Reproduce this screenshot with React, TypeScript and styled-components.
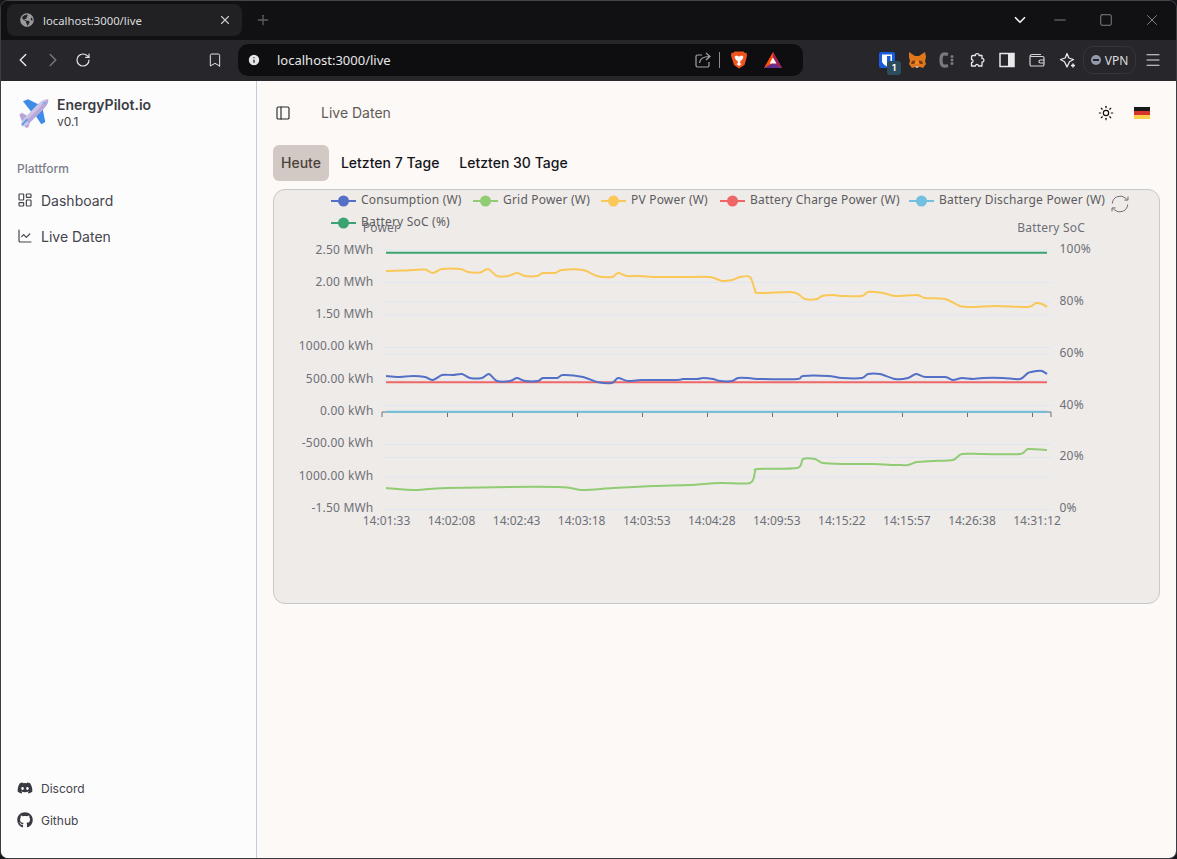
import React from 'react'
import styled, { createGlobalStyle } from 'styled-components'
import {
  Bookmark,
  ChartLine,
  ChevronDown,
  ChevronLeft,
  ChevronRight,
  Info,
  LayoutDashboard,
  Menu,
  Minus,
  PanelLeft,
  Plus,
  RotateCw,
  Square,
  Sun,
  X,
} from 'lucide-react'
import { FaDiscord, FaGithub, FaGlobeAmericas } from 'react-icons/fa'

const GlobalStyle = createGlobalStyle`
  html, body {
    margin: 0;
    padding: 0;
    background: #15161a;
  }
  * {
    box-sizing: border-box;
  }
`

const Window = styled.div`
  width: 1177px;
  height: 859px;
  display: flex;
  flex-direction: column;
  overflow: hidden;
  border: 1px solid #3b3c40;
  border-top-color: #44454a;
  border-radius: 8px;
  font-family: Inter, 'Noto Sans', sans-serif;
  background: #111113;
`

const TabBar = styled.div`
  height: 39px;
  flex: none;
  display: flex;
  align-items: center;
  padding: 3px 0 4px 6px;
  background: #111113;
  color: #e6e6e8;
`

const BrowserTab = styled.div`
  width: 235px;
  height: 32px;
  display: flex;
  align-items: center;
  padding: 0 10px 0 13px;
  gap: 9px;
  border-radius: 8px;
  background: #212124;
  font-family: 'Noto Sans', sans-serif;
  font-size: 11.3px;
  color: #dcdcdf;
`

const TabTitle = styled.span`
  flex: 1;
`

const NewTab = styled.div`
  width: 42px;
  display: flex;
  justify-content: center;
  color: #5c5d62;
`

const WindowControls = styled.div`
  margin-left: auto;
  display: flex;
  align-items: center;
  padding-right: 1px;
`

const WindowButton = styled.div<{ $w: number }>`
  width: ${(p) => p.$w}px;
  display: flex;
  justify-content: center;
  color: #7f7f84;
`

const Toolbar = styled.div`
  height: 41px;
  flex: none;
  display: flex;
  align-items: center;
  padding: 0 0 1px 7px;
  background: #27272b;
  color: #e4e4e6;
`

const NavGroup = styled.div`
  width: 230px;
  display: flex;
  align-items: center;
`

const ToolButton = styled.div<{ $dim?: boolean }>`
  width: 30px;
  height: 30px;
  flex: none;
  position: relative;
  display: flex;
  align-items: center;
  justify-content: center;
  color: ${(p) => (p.$dim ? '#77787c' : '#e4e4e6')};
`

const BookmarkButton = styled(ToolButton)`
  margin-left: auto;
  margin-right: 8px;
`

const AddressBar = styled.div`
  width: 565px;
  height: 32px;
  flex: none;
  display: flex;
  align-items: center;
  padding: 0 13px 0 9px;
  border-radius: 10px;
  background: #0e0e10;
  font-family: 'Noto Sans', sans-serif;
  font-size: 13px;
  color: #e8e8ea;
`

const UrlText = styled.span`
  margin-left: 16px;
  flex: 1;
`

const Divider = styled.span`
  width: 1px;
  height: 16px;
  background: #8b8c90;
  margin: 0 2px 0 7px;
`

const BarIcon = styled.div`
  width: 34px;
  display: flex;
  justify-content: center;
`

const Extensions = styled.div`
  margin-left: 69px;
  display: flex;
  align-items: center;
`

const Badge = styled.span`
  position: absolute;
  right: 1px;
  bottom: 0;
  width: 14px;
  height: 14px;
  border-radius: 3px;
  background: #2d4d5f;
  color: #fff;
  font-size: 9px;
  font-weight: 700;
  line-height: 14px;
  text-align: center;
`

const VpnPill = styled.div`
  width: 53px;
  height: 28px;
  margin: 0 2px 0 1px;
  flex: none;
  display: flex;
  align-items: center;
  justify-content: center;
  gap: 4px;
  border: 1px solid #34353a;
  border-radius: 10px;
  font-family: 'Noto Sans', sans-serif;
  font-size: 12px;
  color: #dcdcdf;
`

const VpnDot = styled.span`
  width: 10px;
  height: 10px;
  border-radius: 50%;
  background: #9499ad;
  display: flex;
  align-items: center;
  justify-content: center;
  &::after {
    content: '';
    width: 6px;
    height: 1.5px;
    background: #27272b;
  }
`

const Page = styled.div`
  flex: 1;
  min-height: 0;
  display: flex;
  background: #fdf9f6;
`

const Sidebar = styled.aside`
  width: 256px;
  flex: none;
  display: flex;
  flex-direction: column;
  justify-content: space-between;
  padding: 16px 16px 24px;
  background: #fcfcfc;
  border-right: 1px solid #c5ccdc;
`

const Brand = styled.div`
  display: flex;
  align-items: center;
  gap: 8px;
  height: 32px;
`

const BrandText = styled.div`
  display: flex;
  flex-direction: column;
  line-height: 16px;
`

const BrandName = styled.span`
  font-size: 14px;
  font-weight: 600;
  color: #3c3c44;
`

const BrandVersion = styled.span`
  margin-top: 1px;
  font-size: 12px;
  color: #3f3f46;
`

const NavLabel = styled.div`
  margin-top: 32px;
  height: 16px;
  line-height: 16px;
  font-size: 12px;
  font-weight: 500;
  color: #7b7f8a;
`

const NavList = styled.nav`
  margin-top: 7px;
  display: flex;
  flex-direction: column;
  gap: 4px;
`

const NavItem = styled.div`
  height: 32px;
  display: flex;
  align-items: center;
  gap: 8px;
  font-size: 14px;
  color: #44444c;
`

const FooterList = styled.div`
  display: flex;
  flex-direction: column;
  gap: 4px;
`

const FooterItem = styled.div`
  height: 28px;
  display: flex;
  align-items: center;
  gap: 8px;
  font-size: 12px;
  color: #45454d;
`

const Main = styled.main`
  flex: 1;
  min-width: 0;
  padding: 0 16px;
`

const Header = styled.header`
  height: 64px;
  display: flex;
  align-items: center;
  color: #27272a;
`

const SidebarToggle = styled(PanelLeft)`
  margin-left: 2px;
`

const HeaderTitle = styled.span`
  margin-left: 30px;
  padding-bottom: 1px;
  font-size: 14px;
  color: #5f5a56;
`

const HeaderActions = styled.div`
  margin-left: auto;
  margin-right: 10px;
  display: flex;
  align-items: center;
  gap: 20px;
`

const Flag = styled.div`
  width: 16px;
  height: 12px;
  display: flex;
  flex-direction: column;
  background: linear-gradient(#1a1a1a 0 33%, #d8342c 33% 66%, #fbce4b 66% 100%);
`

const RangeTabs = styled.div`
  display: flex;
  gap: 4px;
`

const RangeTab = styled.button<{ $active?: boolean }>`
  height: 36px;
  padding: 0 8px 2px;
  border: 0;
  border-radius: 6px;
  background: ${(p) => (p.$active ? '#d2c9c4' : 'transparent')};
  font-family: inherit;
  font-size: 14px;
  font-weight: 500;
  color: ${(p) => (p.$active ? '#4a423c' : '#14161c')};
`

const ChartCard = styled.section`
  margin-top: 8px;
  height: 415px;
  border: 1px solid #c6c8ca;
  border-radius: 12px;
  background: #efebe8;
  overflow: hidden;
`

const ChartSvg = styled.svg`
  display: block;
  width: 100%;
  height: 100%;
`

const ChartText = styled.text<{ $anchor?: string; $dark?: boolean; $tight?: boolean }>`
  font-family: 'Noto Sans', 'Open Sans', sans-serif;
  font-size: 12px;
  letter-spacing: ${(p) => (p.$tight ? '0' : '0.2px')};
  fill: ${(p) => (p.$dark ? '#5c5c60' : '#6e7079')};
  text-anchor: ${(p) => p.$anchor || 'start'};
  dominant-baseline: central;
`

type Pt = [number, number]

const consumption: Pt[] = [
  [386, 376], [398, 377], [413, 376], [425, 377], [433, 380], [442, 375], [453, 375], [462, 374],
  [470, 378], [482, 378], [489, 374], [497, 381], [510, 381], [517, 378], [525, 381], [538, 381],
  [543, 378], [557, 378], [563, 375], [583, 377], [597, 382], [612, 383], [618, 378], [628, 381],
  [642, 380], [677, 380], [683, 379], [697, 379], [703, 378], [713, 379], [720, 381], [732, 381],
  [738, 378], [748, 378], [758, 379], [797, 379], [803, 376], [828, 376], [842, 378], [862, 378],
  [868, 374], [880, 374], [895, 379], [908, 378], [916, 374], [925, 377], [945, 377], [953, 380],
  [962, 378], [973, 379], [983, 378], [1003, 378], [1020, 379], [1028, 373], [1037, 371], [1042, 371],
  [1047, 374],
]

const pvPower: Pt[] = [
  [386, 271], [403, 270.5], [413, 270], [425, 269.5], [433, 273], [442, 269], [460, 269], [468, 272],
  [480, 272.5], [488, 269], [497, 276], [508, 276], [517, 273], [525, 276], [537, 276], [543, 273],
  [555, 273], [562, 270], [583, 270], [597, 276], [612, 277], [618, 273], [627, 276], [640, 276],
  [657, 277], [683, 277], [710, 277], [722, 281], [732, 280], [740, 277], [750, 277], [755, 290],
  [758, 293], [790, 292], [798, 294], [805, 299], [817, 299], [822, 296], [833, 295], [843, 296],
  [862, 296], [868, 292], [883, 293], [895, 296], [917, 295], [925, 298], [945, 299], [960, 306],
  [973, 307], [997, 306], [1028, 307], [1036, 303], [1042, 304], [1047, 307],
]

const gridPower: Pt[] = [
  [386, 488], [417, 490], [447, 488], [557, 487], [582, 490], [613, 488], [653, 486], [690, 485],
  [720, 483], [750, 483], [755, 472], [758, 469], [797, 468], [803, 459], [815, 459], [823, 463],
  [843, 464], [873, 464], [897, 465], [908, 465], [917, 462], [933, 461], [953, 460], [962, 454],
  [983, 454], [1020, 454], [1028, 449], [1047, 450],
]

// catmull-rom, same look as the smooth line of the chart
const smooth = (pts: Pt[]) => {
  let d = `M${pts[0][0]} ${pts[0][1]}`
  for (let i = 0; i < pts.length - 1; i++) {
    const p0 = pts[Math.max(i - 1, 0)]
    const p1 = pts[i]
    const p2 = pts[i + 1]
    const p3 = pts[Math.min(i + 2, pts.length - 1)]
    const c1x = p1[0] + (p2[0] - p0[0]) / 7
    const c1y = p1[1] + (p2[1] - p0[1]) / 7
    const c2x = p2[0] - (p3[0] - p1[0]) / 7
    const c2y = p2[1] - (p3[1] - p1[1]) / 7
    d += ` C${c1x} ${c1y} ${c2x} ${c2y} ${p2[0]} ${p2[1]}`
  }
  return d
}

const gridYs = [250, 282.5, 315, 347.5, 380, 444.5, 477, 509.5, 302, 354, 405.5, 457.5]

const leftLabels: [string, number][] = [
  ['2.50 MWh', 249],
  ['2.00 MWh', 281.5],
  ['1.50 MWh', 313.5],
  ['1000.00 kWh', 345.5],
  ['500.00 kWh', 378],
  ['0.00 kWh', 410.5],
  ['-500.00 kWh', 442.5],
  ['1000.00 kWh', 475],
  ['-1.50 MWh', 507],
]

const rightLabels: [string, number][] = [
  ['100%', 248],
  ['80%', 300],
  ['60%', 352.5],
  ['40%', 404.5],
  ['20%', 455.5],
  ['0%', 507.5],
]

const times = [
  '14:01:33', '14:02:08', '14:02:43', '14:03:18', '14:03:53', '14:04:28',
  '14:09:53', '14:15:22', '14:15:57', '14:26:38', '14:31:12',
]

const ticks = [382, 447.5, 512.5, 577.5, 642.5, 707.5, 772.5, 837.5, 902.5, 967.5, 1032.5, 1051]

const legend: { name: string; color: string; x: number; y: number }[] = [
  { name: 'Consumption (W)', color: '#5470c6', x: 331, y: 201 },
  { name: 'Grid Power (W)', color: '#91cc75', x: 473, y: 201 },
  { name: 'PV Power (W)', color: '#fac858', x: 601, y: 201 },
  { name: 'Battery Charge Power (W)', color: '#ee6666', x: 720, y: 201 },
  { name: 'Battery Discharge Power (W)', color: '#73c0de', x: 909, y: 201 },
  { name: 'Battery SoC (%)', color: '#3ba272', x: 331, y: 223 },
]

const PowerChart = () => (
  <ChartSvg viewBox="274 190 885 413">
    {gridYs.map((y) => (
      <line key={y} x1={382} x2={1051} y1={y} y2={y} stroke="#e0e6f1" strokeWidth={1} />
    ))}
    <line x1={382} x2={1051} y1={412} y2={412} stroke="#6e7079" strokeWidth={1} />
    {ticks.map((x) => (
      <line key={x} x1={x} x2={x} y1={412} y2={417} stroke="#6e7079" strokeWidth={1} />
    ))}

    {leftLabels.map(([label, y]) => (
      <ChartText key={y} x={373.5} y={y} $anchor="end">
        {label}
      </ChartText>
    ))}
    {rightLabels.map(([label, y]) => (
      <ChartText key={y} x={1059.5} y={y}>
        {label}
      </ChartText>
    ))}
    {times.map((t, i) => (
      <ChartText key={t} x={386.5 + 65.05 * i} y={520.5} $anchor="middle" $tight>
        {t}
      </ChartText>
    ))}
    <ChartText x={381} y={227.5} $anchor="middle">
      Power
    </ChartText>
    <ChartText x={1085} y={227.5} $anchor="end">
      Battery SoC
    </ChartText>

    <path d="M386 252.7H1047" stroke="#3ba272" strokeWidth={2} fill="none" />
    <path d={smooth(pvPower)} stroke="#fac858" strokeWidth={2} fill="none" />
    <path d="M386 382.3H1047" stroke="#ee6666" strokeWidth={2} fill="none" />
    <path d={smooth(consumption)} stroke="#5470c6" strokeWidth={2} fill="none" />
    <path d={smooth(gridPower)} stroke="#91cc75" strokeWidth={2} fill="none" />
    <path d="M386 411.7H1047" stroke="#73c0de" strokeWidth={2} fill="none" />

    {legend.map((item) => (
      <g key={item.name}>
        <line x1={item.x} x2={item.x + 25} y1={item.y} y2={item.y} stroke={item.color} strokeWidth={2} />
        <circle cx={item.x + 12.5} cy={item.y} r={5.5} fill={item.color} />
        <ChartText x={item.x + 30} y={item.y - 2} $dark>
          {item.name}
        </ChartText>
      </g>
    ))}

    <g fill="none" stroke="#6e6e70" strokeWidth={1}>
      <path d="M1112.3 203.5a8 8 0 0 1 13.5 -5.2l1.6 1.6" />
      <path d="M1127.7 204.5a8 8 0 0 1 -13.5 5.2l-1.6 -1.6" />
      <path d="M1128 196.500v3.600h-3.600" />
      <path d="M1112 211.500v-3.600h3.600" />
    </g>
  </ChartSvg>
)

const PlaneLogo = () => (
  <svg width="32" height="32" viewBox="0 0 32 32">
    <path d="M15 15.700 6 4.300 11 2.300 23.300 8.300Z" fill="#3f8be8" />
    <path d="M16.700 15.700 25.700 12.300 28.300 25 24.300 27.300Z" fill="#3f8be8" />
    <path d="M2.300 17.700 5 15.700 10.500 19 13 25 11.700 30 9 31 6 27Z" fill="#b7a4d8" />
    <path d="M31 2.300C32 5 29.500 9 27 11.500L12 26.500C9.500 29 6.500 30 4.500 29 3.500 27 4.500 24 7 21.500L22 6C25 3.500 28.500 1.700 31 2.300Z" fill="#cfc4e6" />
    <path d="M31 2.300C32 5 29.500 9 27 11.500L12 26.500 9 24 24 9C26 6.500 28.500 3.500 31 2.300Z" fill="#b9a8da" />
    <path d="M25.500 5 29 5.500 27.500 7.500Z" fill="#5fb4ea" />
    <path d="M5.500 27.500 10 22.500" stroke="#3f9bea" strokeWidth="1.600" strokeLinecap="round" />
  </svg>
)

const BitwardenIcon = () => (
  <svg width="16" height="16" viewBox="0 0 16 16">
    <rect width="16" height="16" rx="2" fill="#175ddc" />
    <path d="M3 2.500h10v6.500c0 2.500-3 4.500-5 5.500-2-1-5-3-5-5.500Z" fill="#fff" />
    <path d="M8 4h3.500v5c0 1.500-2 2.800-3.500 3.600Z" fill="#175ddc" />
  </svg>
)

const FoxIcon = () => (
  <svg width="18" height="17" viewBox="0 0 18 17">
    <path d="M1 0 7 4h4l6-4 1 5-1 4 1 3-3 4-3-1H7l-3 1-3-4 1-3-1-4Z" fill="#e2761b" />
    <path d="M4 9 7.500 8.500 6.500 12 3 12Z" fill="#763d16" />
    <path d="M14 9 10.500 8.500 11.500 12 15 12Z" fill="#763d16" />
    <path d="M7 14h4l-1 2H8Z" fill="#c0ad9e" />
    <path d="M7.500 8.500h3l1 3.500H6.500Z" fill="#f6851b" />
  </svg>
)

const CoderIcon = () => (
  <svg width="16" height="16" viewBox="0 0 16 16">
    <path d="M9 2.500C3.500 .5 2 3 2 8s1.500 7.500 7 5.500" fill="none" stroke="#7a7a7c" strokeWidth="3.200" />
    <circle cx="13" cy="4.500" r="1.500" fill="#7a7a7c" />
    <circle cx="13" cy="8" r="1.500" fill="#7a7a7c" />
    <circle cx="13" cy="11.500" r="1.500" fill="#7a7a7c" />
  </svg>
)

const PuzzleIcon = () => (
  <svg width="16" height="16" viewBox="0 0 16 16" fill="none" stroke="#e8e8ea" strokeWidth="1.300" strokeLinejoin="round">
    <path d="M4 3.500H6.500C6 1 10.500 1 10 3.500H13V6.500C15.500 6 15.500 10.500 13 10V14H9.500C10 12 6 12 6.500 14H2.500V10.500C4.500 11 4.500 7 2.500 7.500V5A1.500 1.500 0 0 1 4 3.500Z" />
  </svg>
)

const SidePanelIcon = () => (
  <svg width="16" height="16" viewBox="0 0 16 16">
    <rect x="1" y="1.500" width="14" height="13" fill="none" stroke="#e8e8ea" strokeWidth="1.500" />
    <rect x="9" y="1.500" width="6" height="13" fill="#e8e8ea" />
  </svg>
)

const WalletIcon = () => (
  <svg width="16" height="16" viewBox="0 0 16 16" fill="none" stroke="#d4d4d6" strokeWidth="1.200">
    <path d="M1 4.500v8A1.500 1.500 0 0 0 2.500 14h11a1.500 1.500 0 0 0 1.500-1.500V6a1.500 1.500 0 0 0-1.500-1.500H1.500" />
    <path d="M1 4.500A2 2 0 0 1 3 2.500h9" />
    <path d="M15 8h-3.500a1.500 1.500 0 0 0 0 3H15" />
  </svg>
)

const SparkIcon = () => (
  <svg width="17" height="17" viewBox="0 0 17 17" fill="none" stroke="#e8e8ea" strokeWidth="1.300">
    <path d="M8 1.500 9.800 6 14.500 7.500 10.500 9.800 8 15 5.500 9.800 1.500 7.500 6.200 6Z" strokeLinejoin="round" />
    <path d="M14 11.500v4M12 13.500h4" strokeWidth="1.500" />
  </svg>
)

const ShareIcon = () => (
  <svg width="18" height="18" viewBox="0 0 18 18" fill="none" stroke="#a4a4a8" strokeWidth="1.200">
    <path d="M8 4H3.500A1.500 1.500 0 0 0 2 5.500v9A1.500 1.500 0 0 0 3.500 16h10a1.500 1.500 0 0 0 1.500-1.500V11" />
    <path d="M5.500 12c.5-4 3-6.500 10-6.500M12 2l4 3.500L12 9" />
  </svg>
)

const BraveIcon = () => (
  <svg width="16" height="18" viewBox="0 0 16 18">
    <path d="M3.500 0.500h9L14 2l1.500-.2.500 3-1 4-1.500 5.200L8 17.500 3 14 1.500 9 0 4.800.5 1.800 2 2Z" fill="#f1531f" />
    <path d="M5 4.500 8 5.500 11 4.500 12.500 6 11 9 9.500 9.800 9 12 10.500 13 8 15 5.500 13 7 12 6.500 9.800 5 9 3.500 6Z" fill="#fff" />
  </svg>
)

const BatIcon = () => (
  <svg width="18" height="16" viewBox="0 0 18 16">
    <path d="M9 0 18 16H0Z" fill="#ff5000" />
    <path d="M0 16 9 11 18 16Z" fill="#662d91" />
    <path d="M9 0 18 16 9 11Z" fill="#9e1f63" />
    <path d="M9 5.500 12.500 11.500H5.500Z" fill="#fff" />
  </svg>
)

const App = () => {
  return (
    <>
      <GlobalStyle />
      <Window>
        <TabBar>
          <BrowserTab>
            <FaGlobeAmericas size={14} color="#9a9a9e" />
            <TabTitle>localhost:3000/live</TabTitle>
            <X size={14} color="#c8c8cc" />
          </BrowserTab>
          <NewTab>
            <Plus size={16} />
          </NewTab>
          <WindowControls>
            <WindowButton $w={34}>
              <ChevronDown size={18} color="#f0f0f0" strokeWidth={2.2} />
            </WindowButton>
            <WindowButton $w={46}>
              <Minus size={18} strokeWidth={1} absoluteStrokeWidth />
            </WindowButton>
            <WindowButton $w={46}>
              <Square size={14} strokeWidth={1} absoluteStrokeWidth />
            </WindowButton>
            <WindowButton $w={46}>
              <X size={18} strokeWidth={1} absoluteStrokeWidth />
            </WindowButton>
          </WindowControls>
        </TabBar>

        <Toolbar>
          <NavGroup>
            <ToolButton>
              <ChevronLeft size={22} strokeWidth={1.6} />
            </ToolButton>
            <ToolButton $dim>
              <ChevronRight size={22} strokeWidth={1.6} />
            </ToolButton>
            <ToolButton>
              <RotateCw size={16} strokeWidth={1.8} />
            </ToolButton>
            <BookmarkButton>
              <Bookmark size={16} strokeWidth={1.5} />
            </BookmarkButton>
          </NavGroup>
          <AddressBar>
            <Info size={14} fill="#e4e4e6" color="#0e0e10" />
            <UrlText>localhost:3000/live</UrlText>
            <ShareIcon />
            <Divider />
            <BarIcon>
              <BraveIcon />
            </BarIcon>
            <BarIcon>
              <BatIcon />
            </BarIcon>
          </AddressBar>
          <Extensions>
            <ToolButton>
              <BitwardenIcon />
              <Badge>1</Badge>
            </ToolButton>
            <ToolButton>
              <FoxIcon />
            </ToolButton>
            <ToolButton>
              <CoderIcon />
            </ToolButton>
            <ToolButton>
              <PuzzleIcon />
            </ToolButton>
            <ToolButton>
              <SidePanelIcon />
            </ToolButton>
            <ToolButton>
              <WalletIcon />
            </ToolButton>
            <ToolButton>
              <SparkIcon />
            </ToolButton>
            <VpnPill>
              <VpnDot />
              VPN
            </VpnPill>
            <ToolButton>
              <Menu size={18} strokeWidth={1.5} />
            </ToolButton>
          </Extensions>
        </Toolbar>

        <Page>
          <Sidebar>
            <div>
              <Brand>
                <PlaneLogo />
                <BrandText>
                  <BrandName>EnergyPilot.io</BrandName>
                  <BrandVersion>v0.1</BrandVersion>
                </BrandText>
              </Brand>
              <NavLabel>Plattform</NavLabel>
              <NavList>
                <NavItem>
                  <LayoutDashboard size={16} strokeWidth={1.8} />
                  Dashboard
                </NavItem>
                <NavItem>
                  <ChartLine size={16} strokeWidth={1.8} />
                  Live Daten
                </NavItem>
              </NavList>
            </div>
            <FooterList>
              <FooterItem>
                <FaDiscord size={16} color="#3a3a42" />
                Discord
              </FooterItem>
              <FooterItem>
                <FaGithub size={16} color="#3a3a42" />
                Github
              </FooterItem>
            </FooterList>
          </Sidebar>

          <Main>
            <Header>
              <SidebarToggle size={16} strokeWidth={1.7} />
              <HeaderTitle>Live Daten</HeaderTitle>
              <HeaderActions>
                <Sun size={16} strokeWidth={1.8} color="#111" />
                <Flag />
              </HeaderActions>
            </Header>
            <RangeTabs>
              <RangeTab $active>Heute</RangeTab>
              <RangeTab>Letzten 7 Tage</RangeTab>
              <RangeTab>Letzten 30 Tage</RangeTab>
            </RangeTabs>
            <ChartCard>
              <PowerChart />
            </ChartCard>
          </Main>
        </Page>
      </Window>
    </>
  )
}

export default App
